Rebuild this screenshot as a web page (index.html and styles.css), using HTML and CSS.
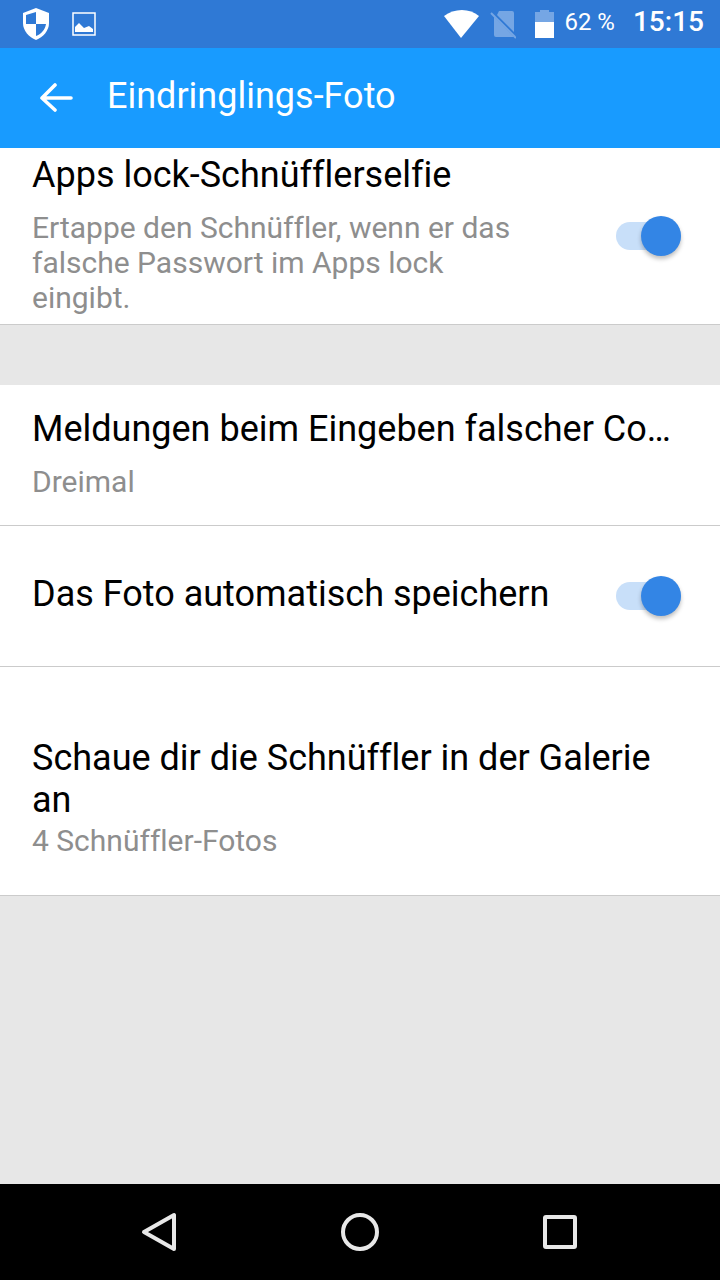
FILE: index.html
```html
<!DOCTYPE html>
<html lang="de">
<head>
  <meta charset="UTF-8" />
  <meta name="viewport" content="width=device-width, initial-scale=1" />
  <title>Eindringlings-Foto</title>
  <link rel="stylesheet" href="styles.css">
</head>
<body>
  <div class="status-bar">
    <div class="status-left">
      <svg width="26" height="32" viewBox="0 0 26 32" aria-hidden="true">
        <path d="M13 0 L26 5 V15 C26 23 20 29 13 32 C6 29 0 23 0 15 V5 Z" fill="#fff"/>
        <path d="M13 4 V16 H3 V7 Z M13 16 H23 C22 22 18 26 13 28 Z" fill="#2f79d5"/>
      </svg>
      <svg width="24" height="24" viewBox="0 0 24 24" aria-hidden="true">
        <rect x="1" y="1" width="22" height="22" fill="none" stroke="#fff" stroke-width="1.5"/>
        <path d="M3 20 V15 L7 11 L12 16 L17 14 L21 17 V20 Z" fill="#fff"/>
      </svg>
    </div>
    <div class="status-right">
      <svg width="36" height="30" viewBox="0 0 36 30" aria-hidden="true">
        <path d="M0 7 C10 -1 26 -1 35 7 L17 29 Z" fill="#fff"/>
      </svg>
      <svg class="sim" width="26" height="30" viewBox="0 0 26 30" aria-hidden="true">
        <path d="M9 2 H22 Q24 2 24 4 V23 L7 6 Z M4 8 L24 28 H6 Q4 28 4 26 Z" fill="#75a6e4"/>
        <path d="M1 4 L26 29" fill="none" stroke="#75a6e4" stroke-width="2"/>
      </svg>
      <svg width="20" height="30" viewBox="0 0 20 30" aria-hidden="true">
        <path d="M1 3 H6 V1 H15 V3 H20 V13 H1 Z" fill="#75a6e4"/>
        <path d="M1 13 H20 V29 H1 Z" fill="#fff"/>
      </svg>
      <span class="battery">62 %</span>
      <span class="clock">15:15</span>
    </div>
  </div>

  <header class="app-bar">
    <button class="back" aria-label="Zurück">
      <svg width="34" height="30" viewBox="0 0 34 30" aria-hidden="true">
        <path d="M32 15 H3 M16 2 L3 15 L16 27" fill="none" stroke="#fff" stroke-width="3.6" stroke-linecap="round" stroke-linejoin="round"/>
      </svg>
    </button>
    <h1>Eindringlings-Foto</h1>
  </header>

  <main>
    <label class="row row-first">
      <span class="text">
        <span class="title">Apps lock-Schnüfflerselfie</span>
        <span class="summary">Ertappe den Schnüffler, wenn er das falsche Passwort im Apps lock eingibt.</span>
      </span>
      <input class="switch" type="checkbox" checked>
    </label>

    <div class="divider"></div>

    <button class="row row-alerts">
      <span class="text">
        <span class="title">Meldungen beim Eingeben falscher Co…</span>
        <span class="summary">Dreimal</span>
      </span>
    </button>

    <label class="row row-save">
      <span class="text">
        <span class="title">Das Foto automatisch speichern</span>
      </span>
      <input class="switch" type="checkbox" checked>
    </label>

    <button class="row row-gallery">
      <span class="text">
        <span class="title">Schaue dir die Schnüffler in der Galerie an</span>
        <span class="summary">4 Schnüffler-Fotos</span>
      </span>
    </button>
  </main>

  <nav class="nav-bar">
    <button aria-label="Zurück">
      <svg width="40" height="40" viewBox="0 0 40 40" aria-hidden="true">
        <path d="M34 3 V37 L4 20 Z" fill="none" stroke="#e8e8e8" stroke-width="4" stroke-linejoin="round"/>
      </svg>
    </button>
    <button aria-label="Startbildschirm">
      <svg width="40" height="40" viewBox="0 0 40 40" aria-hidden="true">
        <circle cx="20" cy="20" r="17" fill="none" stroke="#e8e8e8" stroke-width="4"/>
      </svg>
    </button>
    <button aria-label="Übersicht">
      <svg width="40" height="40" viewBox="0 0 40 40" aria-hidden="true">
        <rect x="5" y="5" width="30" height="30" rx="1" fill="none" stroke="#e8e8e8" stroke-width="4"/>
      </svg>
    </button>
  </nav>
</body>
</html>
```

FILE: styles.css
```css
* {
  box-sizing: border-box;
}

body {
  display: flex;
  flex-direction: column;
  min-height: 100vh;
  margin: 0;
  background: #e7e7e7;
  color: #000;
  font-family: Roboto, sans-serif;
  font-variant-ligatures: none;
}

button {
  border: none;
  padding: 0;
  background: none;
  color: inherit;
  font: inherit;
  font-variant-ligatures: none;
  text-align: left;
  cursor: pointer;
}

svg {
  display: block;
}

.status-bar {
  display: flex;
  justify-content: space-between;
  align-items: center;
  height: 48px;
  padding: 0 16px 0 23px;
  background: #2f79d5;
  color: #fff;
}

.status-left, .status-right {
  display: flex;
  align-items: center;
}

.status-left {
  gap: 23px;
}

.status-right {
  gap: 10px;
}

.sim {
  margin-right: 8px;
}

.battery {
  font-size: 24px;
  line-height: 28px;
  padding-bottom: 4px;
}

.clock {
  font-size: 28px;
  line-height: 32px;
  font-weight: 500;
  padding: 0 0 4px 8px;
}

.app-bar {
  display: flex;
  align-items: center;
  gap: 34px;
  height: 100px;
  padding: 0 39px;
  background: #189bff;
  color: #fff;
}

.app-bar h1 {
  margin: 0;
  padding-bottom: 4px;
  font-size: 36px;
  line-height: 42px;
  font-weight: 400;
}

main {
  flex: 1;
}

.row {
  display: flex;
  align-items: center;
  gap: 40px;
  width: 100%;
  border-bottom: 1px solid #cbcbcb;
  background: #fff;
  cursor: pointer;
}

.row-first {
  padding: 6px 39px 6px 32px;
}

.row-alerts {
  padding: 23px 39px 26px 32px;
}

.row-save {
  padding: 47px 39px 47px 32px;
}

.row-gallery {
  padding: 70px 39px 37px 32px;
}

.text {
  display: flex;
  flex: 1;
  flex-direction: column;
  gap: 14px;
  min-width: 0;
}

.row-first .text {
  padding-bottom: 3px;
}

.row-save .text {
  padding-bottom: 4px;
}

.row-gallery .text {
  gap: 2px;
}

.title {
  font-size: 36px;
  line-height: 42px;
}

.summary {
  padding-right: 48px;
  color: #8e8e8e;
  font-size: 30px;
  line-height: 35px;
}

.divider {
  height: 60px;
}

.switch {
  display: flex;
  align-items: center;
  justify-content: flex-start;
  appearance: none;
  width: 65px;
  height: 28px;
  margin: 0;
  border-radius: 14px;
  background: #c8dff9;
  cursor: pointer;
}

.switch::before {
  content: "";
  width: 40px;
  height: 40px;
  flex: none;
  border-radius: 50%;
  background: #3385e5;
  box-shadow: 0 3px 4px rgba(0, 0, 0, 0.25);
}

.switch:checked {
  justify-content: flex-end;
}

.nav-bar {
  display: flex;
  justify-content: center;
  align-items: center;
  gap: 160px;
  height: 96px;
  background: #000;
}
```
